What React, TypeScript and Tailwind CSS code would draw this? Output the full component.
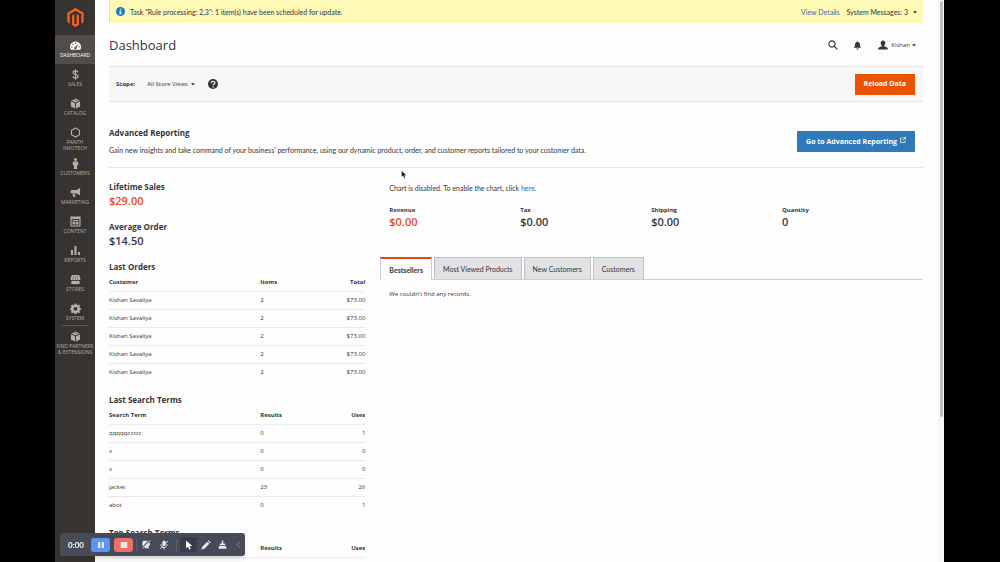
import type { ReactNode } from "react";
import { FaCaretDown } from "react-icons/fa";

const Glyph = ({ children, size = "size-3", box = "0 0 24 24" }: { children: ReactNode; size?: string; box?: string }) => (
  <svg viewBox={box} className={`${size} shrink-0`} fill="currentColor" aria-hidden="true">
    {children}
  </svg>
);

const cube = (
  <>
    <path d="M12 1 21 5.2 12 9.6 3 5.2z" />
    <path d="M2 7l9 4.4V23l-9-4.6z" />
    <path d="M22 7l-9 4.4V23l9-4.6z" />
    <path d="M8 2.6l9 4.4" stroke="#373330" strokeWidth="1" />
  </>
);

const icons: Record<string, ReactNode> = {
  dashboard: (
    <>
      <path d="M12 3A12 12 0 0 0 0 15c0 2.300.6 4.300 1.500 6h21c.9-1.700 1.500-3.700 1.500-6A12 12 0 0 0 12 3z" />
      <g fill="#524d49">
        <circle cx="12" cy="7" r="1.500" />
        <circle cx="6.200" cy="9.500" r="1.500" />
        <circle cx="4" cy="15" r="1.500" />
        <circle cx="20" cy="15" r="1.500" />
        <path d="M18.500 8.500 14.500 17a2.700 2.700 0 1 1-3.500-2z" />
      </g>
    </>
  ),
  sales: (
    <path
      d="M17.500 7.500C17 5.200 15 4.200 12 4.200c-3.200 0-5.300 1.400-5.300 3.700 0 5.400 10.800 2.500 10.800 8 0 2.500-2.200 3.900-5.500 3.900-3.200 0-5.400-1.200-5.800-3.800M12 .5v23"
      fill="none"
      stroke="currentColor"
      strokeWidth="2.600"
    />
  ),
  cube,
  hexagon: <path d="M12 2l8.700 5v10L12 22l-8.700-5V7z" fill="none" stroke="currentColor" strokeWidth="2.400" />,
  customers: (
    <>
      <circle cx="12" cy="3.500" r="3.300" />
      <path d="M8 7.500h8c1.200 0 2 .8 2 2V16h-2.500v8h-7v-8H6V9.500c0-1.200.8-2 2-2z" />
    </>
  ),
  marketing: (
    <>
      <path d="M22 2v16l-8-4H4.500C2.500 14 1 12.300 1 10.300S2.500 6.500 4.500 6.500H14z" />
      <path d="M5 15h5l2 7H7.500z" />
    </>
  ),
  content: (
    <>
      <path d="M1 1h22v22H1zM3.500 6.500v14h17v-14z" fillRule="evenodd" />
      <path d="M5.500 8.500h13V11h-13zM5.500 12.500h5.500v6H5.500zM12.500 12.500h6v6h-6z" />
    </>
  ),
  reports: <path d="M2 11h4.500v11H2zM9.700 2h4.500v20H9.700zM17.500 15H22v7h-4.500z" />,
  stores: (
    <>
      <path d="M4 2h16l3 8.500c0 1.700-1.400 2.800-2.800 2.800-1.500 0-2.700-1.100-2.700-2.500 0 1.400-1.200 2.500-2.700 2.500S12 12.200 12 10.800c0 1.400-1.300 2.500-2.800 2.500s-2.700-1.100-2.700-2.500c0 1.400-1.200 2.500-2.700 2.500S1 12.200 1 10.500z" />
      <path d="M3 15h18v7H3z" />
      <path d="M8 4 6.500 10M12 4v6M16 4l1.500 6" stroke="#373330" strokeWidth="1" />
    </>
  ),
  system: (
    <path
      fillRule="evenodd"
      d="M10 1h4l.7 3.200 2 .8 2.700-1.700 2.800 2.800L20.500 8.800l.8 2L24 11.500v3l-2.700.7-.8 2 1.700 2.700-2.800 2.300-2.700-1.400-2 .8L14 24h-4l-.7-2.400-2-.8-2.700 1.400-2.800-2.300 1.700-2.700-.8-2L0 14.500v-3l2.700-.7.8-2L1.800 6.100l2.800-2.800L7.300 5l2-.8zM12 8.500a4.200 4.200 0 1 0 0 8.400 4.200 4.200 0 0 0 0-8.400z"
    />
  ),
};

const menu = [
  { label: "DASHBOARD", icon: "dashboard", active: true },
  { label: "SALES", icon: "sales" },
  { label: "CATALOG", icon: "cube" },
  { label: "PANTH INFOTECH", icon: "hexagon", tall: true },
  { label: "CUSTOMERS", icon: "customers" },
  { label: "MARKETING", icon: "marketing" },
  { label: "CONTENT", icon: "content" },
  { label: "REPORTS", icon: "reports" },
  { label: "STORES", icon: "stores" },
  { label: "SYSTEM", icon: "system" },
];

function Sidebar() {
  return (
    <nav className="w-10 shrink-0 bg-[#373330] text-[#b5afab]">
      <a href="#home" aria-label="Home" className="flex h-[35px] items-center justify-center text-[#f26322]">
        <Glyph size="h-[19px] w-[17px]" box="0 0 24 28">
          <path d="M12 0l12 7v14l-3.400 2V9L12 4 3.400 9v14L0 21V7z" />
          <path d="M13.700 23 12 24l-1.700-1V9l-3.400 2v14l5.100 3 5.100-3V11l-3.400-2z" />
        </Glyph>
      </a>
      <ul>
        {menu.map((m) => (
          <li key={m.label} className="last:-mb-[3px]">
            <a
              href="#menu"
              className={`flex flex-col items-center gap-px pt-[5px] text-center text-[5px] leading-[6px] ${
                m.tall ? "h-[31px]" : "h-[29px]"
              } ${m.active ? "bg-[#524d49] text-white" : ""}`}
            >
              <Glyph size="size-[11px]">{icons[m.icon]}</Glyph>
              <span className="w-8">{m.label}</span>
            </a>
          </li>
        ))}
      </ul>
      <div className="mx-[7px] mt-px border-t border-[#5d5753]" />
      <a href="#partners" className="flex flex-col items-center gap-px pt-[5px] text-center text-[5px] leading-[6px]">
        <Glyph size="size-[11px]">{icons.cube}</Glyph>
        <span className="whitespace-nowrap">
          FIND PARTNERS
          <br />
          &amp; EXTENSIONS
        </span>
      </a>
    </nav>
  );
}

const Heading = ({ children }: { children: ReactNode }) => <h2 className="text-[8px] leading-3 font-bold">{children}</h2>;

function DataTable({ title, head, rows }: { title: string; head: string[]; rows: string[][] }) {
  return (
    <section>
      <Heading>{title}</Heading>
      <table className="w-full table-fixed border-collapse text-[6px] leading-2">
        <thead>
          <tr className="h-[18px] border-b border-[#ededf1]">
            <th className="w-[59%] text-left font-bold">{head[0]}</th>
            <th className="text-left font-bold">{head[1]}</th>
            <th className="text-right font-bold">{head[2]}</th>
          </tr>
        </thead>
        <tbody>
          {rows.map((r, i) => (
            <tr key={i} className="h-[18px] border-b border-[#e8e8ed] last:border-b-0">
              <td>{r[0]}</td>
              <td>{r[1]}</td>
              <td className="text-right">{r[2]}</td>
            </tr>
          ))}
        </tbody>
      </table>
    </section>
  );
}

const orders = Array.from({ length: 5 }, () => ["Kishan Savaliya", "2", "$73.00"]);
const terms = [
  ["qqqqqzzzzz", "0", "1"],
  ["x", "0", "0"],
  ["x", "0", "0"],
  ["jacket", "23", "26"],
  ["abot", "0", "1"],
];
const totals = [
  ["Revenue", "$0.00"],
  ["Tax", "$0.00"],
  ["Shipping", "$0.00"],
  ["Quantity", "0"],
];
const tabs = ["Bestsellers", "Most Viewed Products", "New Customers", "Customers"];

function Recorder() {
  const tool = "flex h-[15px] w-[18px] items-center justify-center";
  return (
    <div className="fixed bottom-[6px] left-[60px] flex h-[23px] items-center rounded-[3px] bg-[#474b57] pl-2 text-[#e8e8ea] shadow-md">
      <span className="w-[23px] font-['Lato',sans-serif] text-[8px] font-bold text-white">0:00</span>
      <button aria-label="Pause" className="flex h-[14px] w-[19px] items-center justify-center rounded-[3px] bg-[#5b94f5]">
        <Glyph size="size-2"><path d="M3 3h7v18H3zM14 3h7v18h-7z" /></Glyph>
      </button>
      <button aria-label="Stop" className="ml-1 flex h-[14px] w-[19px] items-center justify-center rounded-[3px] bg-[#ee7168]">
        <Glyph size="size-2"><rect x="2" y="3" width="20" height="18" rx="2" /></Glyph>
      </button>
      <span className="ml-[3px] h-3 border-l border-[#5c606c]" />
      <button aria-label="Camera" className={tool}>
        <Glyph size="size-[9px]">
          <path d="M3 2h13L2 17C0 12 0 6 3 2zM20 6c3 5 1 10-4 12l4 4H6l2-3-2-1z" />
          <path d="M2 22 22 1" stroke="currentColor" strokeWidth="2.500" />
        </Glyph>
      </button>
      <button aria-label="Microphone" className={tool}>
        <Glyph size="size-[10px]">
          <rect x="8" y="1" width="8" height="14" rx="4" />
          <path d="M4.500 10c0 11 15 11 15 0M12 18v5M3 21 22 2" fill="none" stroke="currentColor" strokeWidth="2.200" />
        </Glyph>
      </button>
      <span className="mx-[3px] h-3 border-l border-[#5c606c]" />
      <button aria-label="Pointer" className="flex h-[15px] w-[17px] items-center justify-center rounded-[2px] bg-[#3b3d46] text-white">
        <Glyph size="size-[10px]"><path d="M5 1v19l4.500-4L13 23l3.500-1.700-3.400-6.800H20z" /></Glyph>
      </button>
      <button aria-label="Pen" className="flex h-[15px] w-[17px] items-center justify-center">
        <Glyph size="size-[10px]"><path d="M1 23l2-7L15 4l5 5L8 21zM16.500 2.500l2-2 5 5-2 2z" /></Glyph>
      </button>
      <button aria-label="Clear" className="flex h-[15px] w-[17px] items-center justify-center">
        <Glyph size="size-[9px]"><path d="M10 1h4v8h4l2 5H4l2-5h4zM3 16h18l2 7H1z" /></Glyph>
      </button>
      <button aria-label="Collapse" className="flex h-[15px] w-[14px] items-center justify-center text-[#8b8f9a]">
        <Glyph size="size-[7px]"><path d="M16 2 7 12l9 10" fill="none" stroke="currentColor" strokeWidth="3" /></Glyph>
      </button>
    </div>
  );
}

export default function App() {
  return (
    <div className="flex h-screen overflow-hidden bg-black pr-14 pl-[55px] font-['Open_Sans',sans-serif] text-[6px] leading-2 text-[#41362f]">
      <Sidebar />
      <div className="flex min-w-0 flex-1 bg-[#fefdfe]">
        <div className="min-w-0 flex-1 pr-[15px] pl-[14px] text-[#35353a]">
          <div className="flex h-[23px] items-center border-l border-[#e8dfa0] bg-[#fff9b8] pr-[5px] pl-[6px] font-['Lato',sans-serif] text-[7px]">
            <Glyph size="size-[9px]">
              <circle cx="12" cy="12" r="12" fill="#1979c3" />
              <path d="M10.500 4.500h4v3h-4zM8.500 10h5.500v7.500h1.500V19h-7v-1.500H10v-6H8.500z" fill="#fff" />
            </Glyph>
            <p className="ml-[5px] flex-1">Task "Rule processing: 2,3": 1 item(s) have been scheduled for update.</p>
            <a href="#details" className="text-[#3f6a9e]">View Details</a>
            <button className="ml-[7px] flex items-center gap-1">
              System Messages: 3 <FaCaretDown className="size-[6px]" />
            </button>
          </div>

          <header className="flex h-[43px] items-center pt-px pr-[6px]">
            <h1 className="flex-1 text-[13px] leading-5">Dashboard</h1>
            <button aria-label="Search">
              <Glyph size="size-[10px]">
                <path d="M9.500 2a7.500 7.500 0 1 0 0 15 7.500 7.500 0 0 0 0-15zM15 15l7.500 7.500" fill="none" stroke="currentColor" strokeWidth="2.600" />
              </Glyph>
            </button>
            <button aria-label="Notifications" className="ml-[15px]">
              <Glyph size="size-[9px]">
                <path d="M12 1c1 0 1.800.8 1.800 1.800 3.200.8 4.700 3.400 4.700 6.700 0 5 1.500 6.500 3.500 8.500H2c2-2 3.500-3.500 3.500-8.500 0-3.300 1.500-5.900 4.700-6.700C10.200 1.800 11 1 12 1zM9 20h6c0 4-6 4-6 0z" />
              </Glyph>
            </button>
            <button className="ml-4 flex items-center">
              <Glyph size="size-[10px]">
                <path d="M12 1c3.500 0 5.500 2.400 5.500 6 0 3-1.200 5.300-3 6.500v1.700c3 1.300 9.500 1.800 9.500 7.800H0c0-6 6.500-6.500 9.500-7.800v-1.700c-1.800-1.200-3-3.500-3-6.500 0-3.600 2-6 5.500-6z" />
              </Glyph>
              <span className="ml-[3px]">Kishan</span>
              <FaCaretDown className="ml-px size-[6px]" />
            </button>
          </header>

          <div className="flex h-9 items-center border-y border-[#e5e4ea] bg-[#f6f6f7] pr-2 pl-[7px]">
            <label htmlFor="scope" className="font-bold">Scope:</label>
            <select id="scope" className="ml-3 appearance-none bg-transparent">
              <option>All Store Views</option>
            </select>
            <FaCaretDown className="ml-[2px] size-[6px]" aria-hidden="true" />
            <button aria-label="Help" className="ml-3">
              <Glyph size="size-[10px]">
                <circle cx="12" cy="12" r="12" />
                <path d="M8 9.500C8 4 16.500 4.200 16.500 9c0 3.200-4 3-4 6.200M12.500 17.300v3" fill="none" stroke="#fff" strokeWidth="2.800" />
              </Glyph>
            </button>
            <button className="ml-auto h-[21px] bg-[#eb5202] px-[9px] text-[7px] font-bold text-white">Reload Data</button>
          </div>

          <section className="flex h-[66px] items-start border-b border-[#e6e6ec] pr-2">
            <div className="flex-1 pt-[25px]">
              <Heading>Advanced Reporting</Heading>
              <p className="mt-[7px] font-['Lato',sans-serif] text-[7px]">
                Gain new insights and take command of your business' performance, using our dynamic product, order, and customer reports
                tailored to your customer data.
              </p>
            </div>
            <a
              href="#reporting"
              className="mt-[29px] flex h-[21px] items-center gap-[3px] bg-[#2f7ab8] px-[9px] text-[7px] font-bold text-white"
            >
              Go to Advanced Reporting
              <Glyph size="mb-1 size-[6px]">
                <path d="M10 4H2v18h18v-8M13 2h9v9M22 2 10 14" fill="none" stroke="currentColor" strokeWidth="2.800" />
              </Glyph>
            </a>
          </section>

          <div className="grid grid-cols-3">
            <div className="flex flex-col gap-[13px] pt-[13px] pr-[15px]">
              <div>
                <Heading>Lifetime Sales</Heading>
                <p className="text-[11px] leading-[15px] font-semibold text-[#e04b14]">$29.00</p>
              </div>
              <div>
                <Heading>Average Order</Heading>
                <p className="text-[11px] leading-[15px] font-semibold">$14.50</p>
              </div>
              <DataTable title="Last Orders" head={["Customer", "Items", "Total"]} rows={orders} />
              <DataTable title="Last Search Terms" head={["Search Term", "Results", "Uses"]} rows={terms} />
              <DataTable title="Top Search Terms" head={["Search Term", "Results", "Uses"]} rows={[]} />
            </div>

            <div className="col-span-2 pt-4">
              <p className="pl-[9px] font-['Lato',sans-serif] text-[7px]">
                Chart is disabled. To enable the chart, click <a href="#chart" className="text-[#2a6cae]">here</a>.
              </p>
              <dl className="mt-[14px] grid grid-cols-4 pr-[10px] pl-[9px]">
                {totals.map(([k, v], i) => (
                  <div key={k}>
                    <dt className="font-bold">{k}</dt>
                    <dd className={`text-[11px] leading-[15px] font-semibold ${i === 0 ? "text-[#e04b14]" : ""}`}>{v}</dd>
                  </div>
                ))}
              </dl>
              <div role="tablist" className="mt-7 flex gap-[2px] border-b border-[#cfcfd3] font-['Lato',sans-serif] text-[7px]">
                {tabs.map((t, i) => (
                  <button
                    key={t}
                    role="tab"
                    aria-selected={i === 0}
                    className={
                      i === 0
                        ? "-mb-px h-[23px] border-x border-t-2 border-x-[#cfcfd3] border-t-[#e04b14] bg-[#fefdfe] px-2 font-bold"
                        : "h-[22px] border-x border-t border-[#bdbdc1] bg-[#e2e2e4] px-2"
                    }
                  >
                    {t}
                  </button>
                ))}
              </div>
              <p className="mt-[10px] pl-[9px]">We couldn't find any records.</p>
            </div>
          </div>
        </div>
        <div className="flex w-[6px] shrink-0 flex-col items-center bg-[#f6f5f7]">
          <div className="mt-px h-[74%] w-[3px] rounded-full bg-[#bfbfc1]" />
        </div>
      </div>
      <Recorder />
      <svg viewBox="0 0 12 18" className="fixed top-[170px] left-[401px] h-[9px] w-[6px]" aria-hidden="true">
        <path d="M1 1v13l3-2.500L6.500 17 9 16l-2.500-5H11z" fill="#111" stroke="#fff" strokeWidth=".8" />
      </svg>
    </div>
  );
}
